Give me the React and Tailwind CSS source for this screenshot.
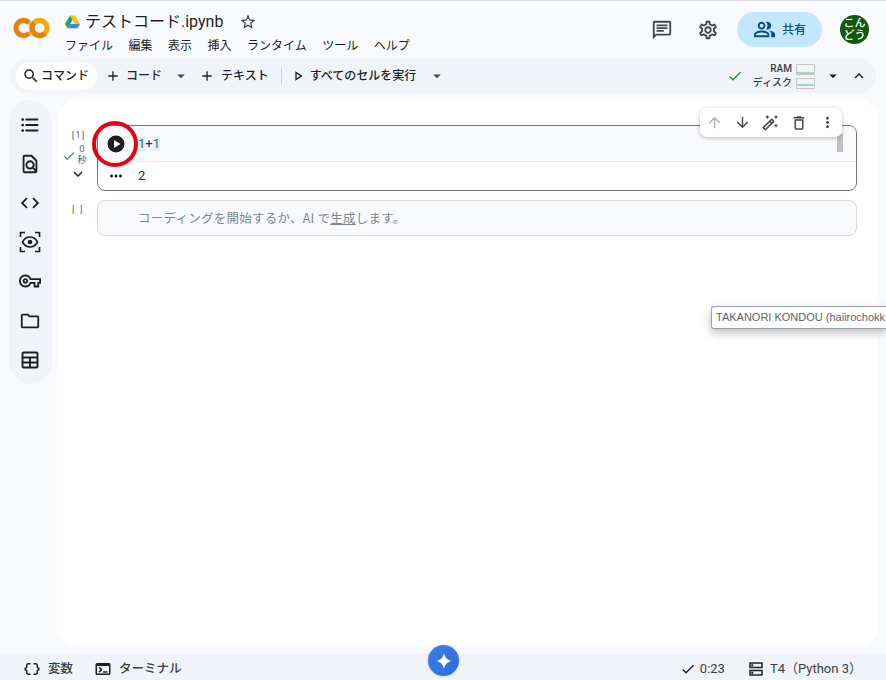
import React from "react";
import {
  MdOutlineChat, MdOutlineSettings, MdOutlinePeopleAlt, MdSearch, MdAdd, MdArrowDropDown, MdCheck,
  MdExpandLess, MdExpandMore, MdArrowUpward, MdArrowDownward, MdOutlineDelete, MdMoreVert, MdMoreHoriz,
  MdFormatListBulleted, MdOutlineFindInPage, MdCode, MdOutlineVpnKey, MdOutlineFolder,
  MdStarBorder, MdOutlineAutoFixHigh, MdOutlinePlayArrow, MdDataObject, MdOutlineTerminal, MdOutlineDns,
} from "react-icons/md";

const jp = "font-['Roboto','Noto_Sans_CJK_JP',sans-serif]";

function Logo() {
  return (
    <svg width="37" height="22" viewBox="0 0 37 22" className="shrink-0">
      <path d="M16 5.700a7.600 7.600 0 1 0 0 10.600" fill="none" stroke="#e8810c" strokeWidth="5.200" />
      <circle cx="26.500" cy="11" r="7.600" fill="none" stroke="#f5a70f" strokeWidth="5.200" />
      <path d="M21.100 5.700a7.600 7.600 0 0 0 0 10.600 7.600 7.600 0 0 0 10.800 0" fill="none" stroke="#e8810c" strokeWidth="5.200" />
      <path d="M15.700 5.300l1.800 1.800M15.700 16.700l1.800-1.800" stroke="#f5a70f" strokeWidth="3" />
    </svg>
  );
}

function Drive() {
  return (
    <svg width="15" height="14" viewBox="0 0 15 14" className="shrink-0">
      <path d="M5 0.500h5l5 8.500h-5z" fill="#fbbc04" />
      <path d="M5 0.500 0 9l2.500 4.300L7.500 5z" fill="#1fa463" />
      <path d="M2.500 13.300h10L15 9H5z" fill="#4285f4" />
    </svg>
  );
}

function FocusEye() {
  return (
    <svg width="22" height="22" viewBox="0 0 22 22" fill="none" stroke="#1f1f1f" strokeWidth="1.700">
      <path d="M1.500 6V1.500H6M16 1.500h4.500V6M20.500 16v4.500H16M6 20.500H1.500V16" />
      <path d="M3.500 11C5.200 7.800 8 6 11 6s5.800 1.800 7.500 5c-1.700 3.200-4.500 5-7.500 5s-5.800-1.800-7.500-5z" />
      <circle cx="11" cy="11" r="2.300" fill="#1f1f1f" stroke="none" />
    </svg>
  );
}

function TableIcon() {
  return (
    <svg width="22" height="22" viewBox="0 0 22 22" fill="none" stroke="#1f1f1f" strokeWidth="1.900">
      <rect x="3.500" y="3.500" width="15" height="15" rx="1" />
      <path d="M3.500 8.500h15M3.500 13.500h15M11 8.500v10" />
    </svg>
  );
}

function RunButton() {
  return (
    <svg width="20" height="20" viewBox="0 0 20 20" className="shrink-0">
      <circle cx="10" cy="10" r="8.500" fill="#1f1f1f" />
      <path d="M8 6 14.500 10 8 14z" fill="#fff" />
    </svg>
  );
}

function Spark() {
  return (
    <svg width="16" height="16" viewBox="0 0 16 16">
      <path d="M8 0C8.700 4.500 11.500 7.300 16 8 11.500 8.700 8.700 11.500 8 16 7.300 11.500 4.500 8.700 0 8 4.500 7.300 7.300 4.500 8 0z" fill="#fff" />
    </svg>
  );
}

function Meter({ lines }) {
  return (
    <div className="flex h-[11px] w-[19px] flex-col justify-end border border-[#c4c7c5]">
      <div className={lines ? "mb-[2px] h-[2px] bg-[#a8d5b5]" : "h-[2px] bg-[#a8d5b5]"} />
    </div>
  );
}

function Header() {
  return (
    <header className="flex h-[58px] shrink-0 items-start pl-[13px] pr-[17px]">
      <div className="mt-[16px]"><Logo /></div>
      <div className="ml-[15px] mt-[10px] flex flex-col">
        <div className="flex h-[22px] items-center">
          <Drive />
          <span className="ml-[5px] text-[16px] leading-[22px] text-[#1f1f1f]">テストコード.ipynb</span>
          <MdStarBorder className="ml-[16px] text-[#3c4043]" size={18} />
        </div>
        <nav className="mt-[2px] flex h-[22px] items-center gap-[15.500px] text-[12px] leading-[22px] text-[#1f1f1f]">
          <span>ファイル</span><span>編集</span><span>表示</span><span>挿入</span><span>ランタイム</span><span>ツール</span><span>ヘルプ</span>
        </nav>
      </div>
      <div className="ml-auto mt-[11px] flex items-start">
        <MdOutlineChat className="mt-[7px] text-[#444746]" size={22} />
        <MdOutlineSettings className="ml-[24px] mt-[7px] text-[#444746]" size={22} />
        <button className="ml-[18px] flex h-[35px] w-[85px] items-center justify-center gap-[6px] rounded-full bg-[#c2e7ff] text-[12px] font-medium text-[#0b4f7a]">
          <MdOutlinePeopleAlt size={23} className="text-[#0b4f7a]" />
          <span>共有</span>
        </button>
        <div className="ml-[18px] mt-[3px] flex h-[29px] w-[29px] items-center justify-center rounded-full bg-[#0f5a0f] text-center text-[11px] font-medium leading-[12px] text-white">
          こん<br />どう
        </div>
      </div>
    </header>
  );
}

function Toolbar() {
  return (
    <div className="mx-[10px] flex h-[34px] shrink-0 items-center rounded-full bg-[#f0f4f9] pl-[6px] pr-[8px] text-[12px] text-[#1f1f1f]">
      <div className="flex h-[28px] w-[81px] items-center justify-center gap-[1px] rounded-full bg-white pr-[2px]">
        <MdSearch size={18} className="text-[#1f1f1f]" />
        <span className="font-medium">コマンド</span>
      </div>
      <div className="ml-[8px] flex items-center">
        <MdAdd size={16} />
        <span className="ml-[5px] font-medium">コード</span>
        <MdArrowDropDown size={18} className="ml-[10px] text-[#444746]" />
      </div>
      <div className="ml-[9px] flex items-center">
        <MdAdd size={16} />
        <span className="ml-[6px] font-medium">テキスト</span>
      </div>
      <div className="ml-[12px] h-[18px] w-px bg-[#d3d6d9]" />
      <div className="ml-[8px] flex items-center">
        <MdOutlinePlayArrow size={16} />
        <span className="ml-[4px] font-medium">すべてのセルを実行</span>
        <MdArrowDropDown size={18} className="ml-[12px] text-[#444746]" />
      </div>
      <div className="ml-auto flex items-center">
        <MdCheck size={16} className="text-[#1e8e3e]" />
        <div className="ml-[10px] flex flex-col items-end text-right text-[10px] font-medium leading-[14px] text-[#3c4043]">
          <div className="flex h-[14px] items-center gap-[4px]"><span>RAM</span><Meter /></div>
          <div className="flex h-[14px] items-center gap-[4px]"><span>ディスク</span><Meter lines /></div>
        </div>
        <MdArrowDropDown size={18} className="ml-[9px] text-[#1f1f1f]" />
        <MdExpandLess size={18} className="ml-[8px] text-[#1f1f1f]" />
      </div>
    </div>
  );
}

function Sidebar() {
  const cls = "flex h-[39.200px] w-full items-center justify-center pr-[1px] text-[#1f1f1f]";
  return (
    <aside className="ml-[9px] flex h-[284px] w-[43px] shrink-0 flex-col rounded-full bg-[#f0f4f9] pt-[5px]">
      <div className={cls}><MdFormatListBulleted size={22} /></div>
      <div className={cls}><MdOutlineFindInPage size={22} /></div>
      <div className={cls}><MdCode size={22} /></div>
      <div className={cls}><FocusEye /></div>
      <div className={cls}><MdOutlineVpnKey size={22} /></div>
      <div className={cls}><MdOutlineFolder size={22} /></div>
      <div className={cls}><TableIcon /></div>
    </aside>
  );
}

function Main() {
  return (
    <main className="relative ml-[6px] h-[546px] w-[821px] shrink-0 overflow-hidden rounded-[20px] bg-white pt-[25px]">
      <div className="flex items-start">
        <div className="flex h-[66px] w-[39px] flex-col items-center pt-[5px] text-[9.500px] leading-[10px] text-[#5f6368]">
          <span className="ml-[2px] tracking-[1px]">[1]</span>
          <div className="mt-[3px] flex items-center pr-[6px]">
            <MdCheck size={14} className="mt-[4px] text-[#1e8e3e]" />
            <span className="ml-[1px] w-[10px] text-center leading-[11px]">0<br />秒</span>
          </div>
          <MdExpandMore size={18} className="text-[#1f1f1f]" />
        </div>
        <div className="relative h-[66px] w-[760px] overflow-hidden rounded-[8px] border border-[#747775]">
          <div className="flex h-[36px] items-center border-b border-[#e8eaed] bg-[#f8fafd] pl-[8px]">
            <RunButton />
            <span className="ml-[12px] text-[13px] leading-[18px] text-[#1a1ab8]">
              <span className="bg-[#e2f0f3] text-[#1c6f9c]">1</span>+<span className="bg-[#e2f0f3] text-[#1c6f9c]">1</span>
            </span>
          </div>
          <div className="flex h-[28px] items-center pl-[8px]">
            <MdMoreHoriz size={18} className="ml-[1px] text-[#1f1f1f]" />
            <span className="ml-[13px] text-[13px] text-[#1f1f1f]">2</span>
          </div>
        </div>
      </div>
      <div className="mt-[9px] flex items-start">
        <div className="w-[39px] pl-[14px] pt-[3px] text-[9.500px] leading-[12px] tracking-[1.500px] text-[#5f6368]">[ ]</div>
        <div className="flex h-[36px] w-[760px] items-center rounded-[8px] border border-[#d5d8dc] bg-[#f8fafd] pl-[40px] font-['Noto_Sans_CJK_JP',sans-serif] text-[12.500px] tracking-[0.250px] text-[#80868b]">
          <span>コーディングを開始するか、AI で<u>生成</u>します。</span>
        </div>
      </div>
      <div className="absolute left-[779px] top-[34px] h-[18px] w-[6px] bg-[#c1c1c1]" />
      <div className="absolute left-[642px] top-[8px] flex h-[29px] w-[142px] items-center justify-around rounded-[7px] bg-white px-[1px] shadow-[0_1px_4px_rgba(60,64,67,0.35)]">
        <MdArrowUpward size={17} className="text-[#b0b3b5]" />
        <MdArrowDownward size={17} className="text-[#444746]" />
        <MdOutlineAutoFixHigh size={18} className="text-[#444746]" />
        <MdOutlineDelete size={18} className="text-[#444746]" />
        <MdMoreVert size={17} className="text-[#444746]" />
      </div>
    </main>
  );
}

function Footer() {
  return (
    <footer className="mt-[7px] flex h-[27px] shrink-0 items-center bg-[#f0f4f9] pl-[23px] pr-[24px] pt-[5px] text-[12.500px] text-[#3c4043]">
      <MdDataObject size={18} className="text-[#1f1f1f]" />
      <span className="ml-[7px] font-medium">変数</span>
      <MdOutlineTerminal size={18} className="ml-[21px] text-[#1f1f1f]" />
      <span className="ml-[7px] font-medium">ターミナル</span>
      <div className="ml-auto flex items-center text-[13px]">
        <MdCheck size={16} className="text-[#1f1f1f]" />
        <span className="ml-[4px]">0:23</span>
        <MdOutlineDns size={18} className="ml-[22px] text-[#1f1f1f]" />
        <span className="ml-[5px]">T4（Python 3）</span>
      </div>
    </footer>
  );
}

export default function App() {
  return (
    <div className={`relative flex h-[680px] w-[886px] flex-col overflow-hidden border-t border-[#dadce0] bg-[#f8fafd] ${jp}`}>
      <Header />
      <Toolbar />
      <div className="mt-[7px] flex h-[546px] shrink-0 items-start">
        <Sidebar />
        <Main />
      </div>
      <Footer />
      <div className="absolute left-[92px] top-[120px] h-[46px] w-[46px] rounded-full border-[4.500px] border-[#e60012]" />
      <div className="absolute left-[428px] top-[644px] flex h-[31px] w-[31px] items-center justify-center rounded-full bg-gradient-to-br from-[#3f7fe8] to-[#2a6be0] shadow-[0_0_2px_rgba(0,0,0,0.2)]">
        <Spark />
      </div>
      <div className="absolute left-[711px] top-[305px] flex h-[23px] w-[175px] items-center overflow-hidden whitespace-nowrap rounded-l-[3px] border-y border-l border-[#9aa0a6] bg-white pl-[4px] font-['Liberation_Sans',sans-serif] text-[11px] text-[#5f6368] shadow-[0_4px_10px_rgba(0,0,0,0.25)]">
        TAKANORI KONDOU (haiirochokk
      </div>
    </div>
  );
}
